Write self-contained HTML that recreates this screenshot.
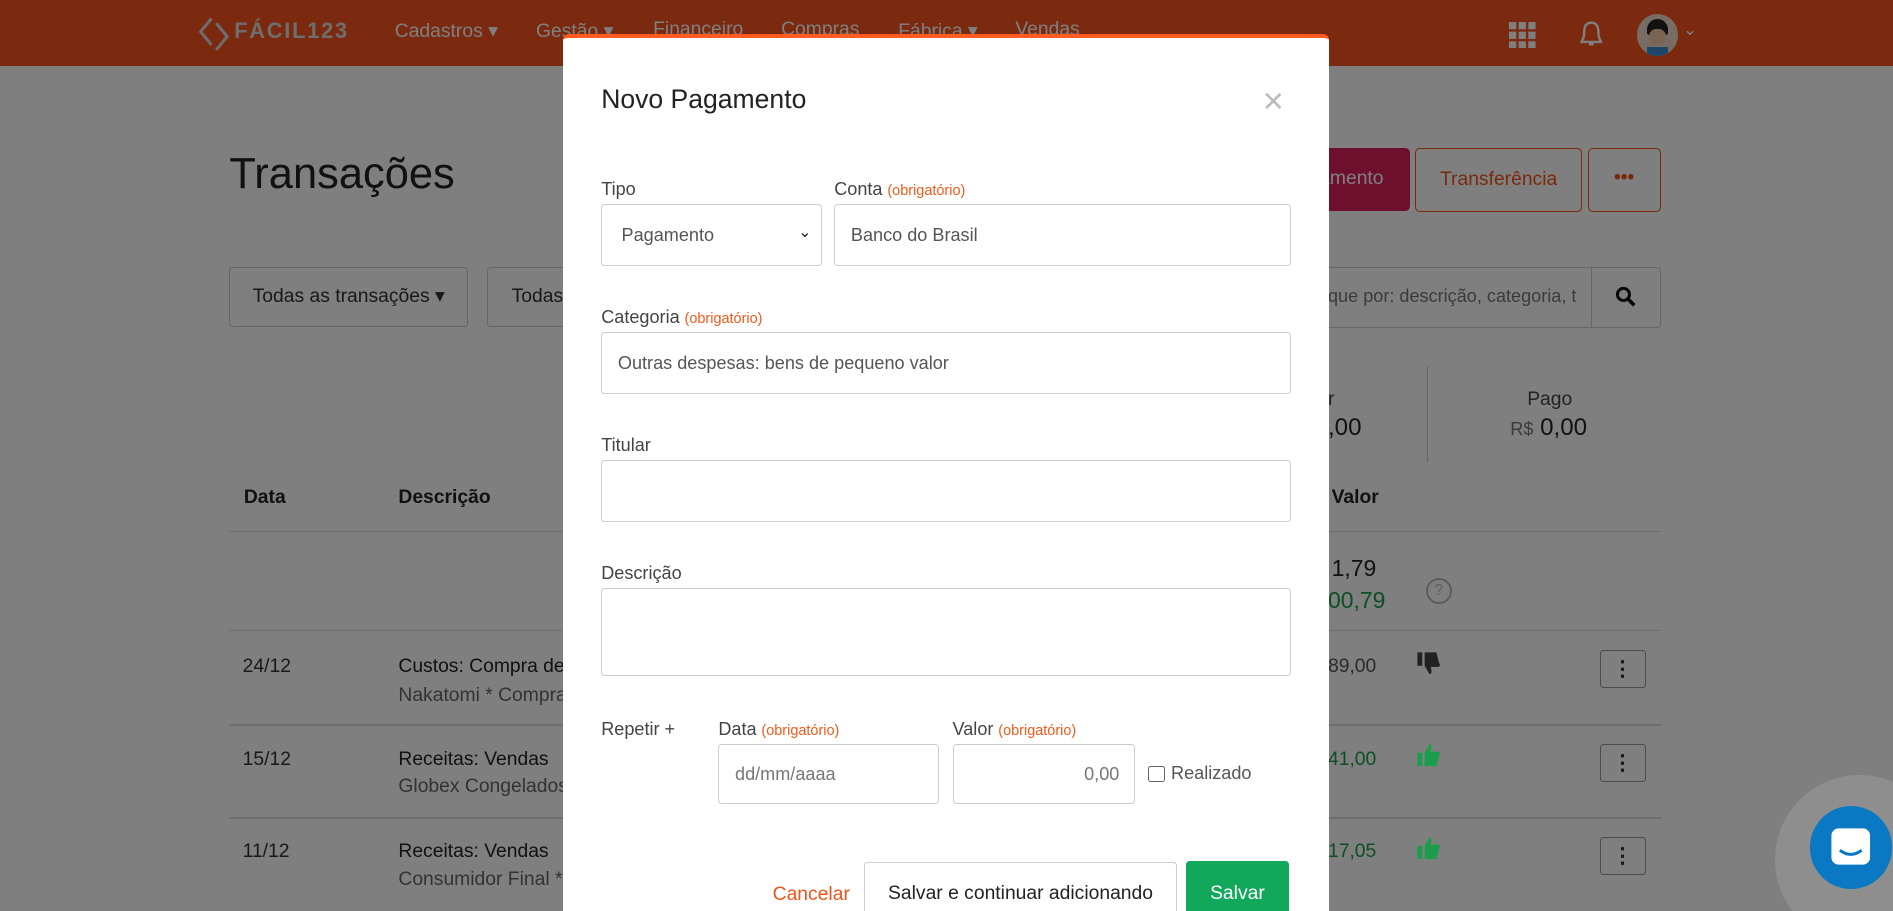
<!DOCTYPE html>
<html><head><meta charset="utf-8"><style>
html,body{margin:0;padding:0;overflow:hidden}
body{width:1568px;height:755px;zoom:1.20727;position:relative;font-family:"Liberation Sans",sans-serif;background:#fff;color:#333}
.a{position:absolute;white-space:nowrap}
.hdr{position:absolute;left:0;top:0;width:1568px;height:55px;background:#f6541e}
.nav{color:#fff;font-size:16px;top:16px}
.ov{position:absolute;left:0;top:0;width:1568px;height:755px;background:rgba(0,0,0,.5)}
.modal{position:absolute;left:466px;top:28px;width:635px;height:740px;background:#fff;border-top:4px solid #ff5a1f;border-radius:5px 5px 0 0}
.lbl{font-size:15px;color:#444}
.req{font-size:12px;color:#f05a1a;margin-left:4px}
.in{position:absolute;border:1px solid #ccc;border-radius:3px;background:#fff;font-size:15px;color:#555;box-sizing:border-box}
.btnk{position:absolute;width:38px;height:32px;border:1px solid #999;border-radius:3px;box-sizing:border-box;font-size:18px;text-align:center;line-height:30px;font-weight:bold;color:#333}
</style></head><body>
<div class="hdr"></div>
<svg class="a" style="left:163px;top:13px" width="28" height="30" viewBox="0 0 28 30"><path d="M12 2 L3 13 L12 24 M16 6 L25 17 L16 28" stroke="#ddd" stroke-width="2.5" fill="none"/></svg>
<div class="a" style="left:194px;top:15px;font-size:18px;color:#ddd;letter-spacing:1.5px;font-weight:bold">FÁCIL123</div>
<div class="a nav" style="left:327px">Cadastros ▾</div>
<div class="a nav" style="left:444px">Gestão ▾</div>
<div class="a nav" style="left:541px">Financeiro</div>
<div class="a nav" style="left:647px">Compras</div>
<div class="a nav" style="left:744px">Fábrica ▾</div>
<div class="a nav" style="left:841px">Vendas</div>
<svg class="a" style="left:1250px;top:18px" width="22" height="22"><g fill="#fff"><rect x="0" y="0" width="6" height="6"/><rect x="8" y="0" width="6" height="6"/><rect x="16" y="0" width="6" height="6"/><rect x="0" y="8" width="6" height="6"/><rect x="8" y="8" width="6" height="6"/><rect x="16" y="8" width="6" height="6"/><rect x="0" y="16" width="6" height="6"/><rect x="8" y="16" width="6" height="6"/><rect x="16" y="16" width="6" height="6"/></g></svg>
<svg class="a" style="left:1307px;top:16px" width="22" height="26"><path d="M11 3 C5 3 5 9 5 14 L3 19 L19 19 L17 14 C17 9 17 3 11 3Z M9 21 h4" stroke="#fff" stroke-width="2" fill="none"/></svg>
<div class="a" style="left:1356px;top:12px;width:34px;height:34px;border-radius:50%;background:#f0d8c8;overflow:hidden"><div style="position:absolute;left:8px;top:4px;width:18px;height:13px;background:#222;border-radius:9px 9px 2px 2px"></div><div style="position:absolute;left:10px;top:12px;width:14px;height:13px;background:#f5c9a8;border-radius:6px"></div><div style="position:absolute;left:8px;top:27px;width:18px;height:10px;background:#3a8fd0"></div></div>
<div class="a" style="left:1394px;top:16px;color:#fff;font-size:14px">⌄</div>

<div class="a" style="left:190px;top:124px;font-size:36px;color:#222">Transações</div>
<div class="a" style="left:1080px;top:123px;width:88px;height:52px;background:#dc1f5d;border-radius:4px;color:#fff;font-size:16px;line-height:52px;text-align:right;padding-right:0"><span style="margin-right:22px">gamento</span></div>
<div class="a" style="left:1172px;top:123px;width:137px;height:51px;border:1px solid #f0541a;border-radius:4px;color:#f0541a;font-size:16px;line-height:51px;text-align:center">Transferência</div>
<div class="a" style="left:1315px;top:123px;width:59px;height:51px;border:1px solid #f0541a;border-radius:4px;color:#f0541a;font-size:16px;line-height:48px;text-align:center;font-weight:bold">•••</div>
<div class="a" style="left:190px;top:221px;width:196px;height:48px;border:1px solid #ccc;border-radius:3px;line-height:48px;text-align:center;font-size:16px;color:#333">Todas as transações ▾</div>
<div class="a" style="left:403px;top:221px;width:100px;height:48px;border:1px solid #ccc;border-radius:3px;line-height:48px;font-size:16px;color:#333;padding-left:20px">Todas</div>
<div class="a" style="left:1090px;top:221px;width:284px;height:49px;border:1px solid #ccc;border-radius:3px"></div>
<div class="a" style="left:1100px;top:237px;font-size:15px;color:#777">que por: descrição, categoria, t</div>
<div class="a" style="left:1318px;top:221px;width:1px;height:50px;background:#ccc"></div>
<svg class="a" style="left:1338px;top:237px" width="18" height="18"><circle cx="7" cy="7" r="5" stroke="#111" stroke-width="2.5" fill="none"/><path d="M11 11 L16 16" stroke="#111" stroke-width="3"/></svg>
<div class="a" style="left:1100px;top:322px;font-size:16px;color:#444">r</div>
<div class="a" style="left:1100px;top:343px;font-size:20px;color:#222">,00</div>
<div class="a" style="left:1182px;top:303px;width:1px;height:80px;background:#ccc"></div>
<div class="a" style="left:1265px;top:322px;font-size:16px;color:#444">Pago</div>
<div class="a" style="left:1251px;top:343px;font-size:20px;color:#222"><span style="font-size:15px;color:#777">R$</span> 0,00</div>
<div class="a" style="left:202px;top:403px;font-size:16px;font-weight:bold;color:#222">Data</div>
<div class="a" style="left:330px;top:403px;font-size:16px;font-weight:bold;color:#222">Descrição</div>
<div class="a" style="left:1103px;top:403px;font-size:16px;font-weight:bold;color:#222">Valor</div>
<div class="a" style="left:190px;top:440px;width:1186px;height:1px;background:#ddd"></div>
<div class="a" style="left:1103px;top:460px;font-size:19px;color:#222">1,79</div>
<div class="a" style="left:1100px;top:486px;font-size:19px;color:#1a9e4b">00,79</div>
<div class="a" style="left:1181px;top:479px;width:18px;height:18px;border:2px solid #bbb;border-radius:50%;font-size:13px;color:#bbb;text-align:center;line-height:18px">?</div>
<div class="a" style="left:190px;top:522px;width:1186px;height:1px;background:#ddd"></div>
<div class="a" style="left:190px;top:600px;width:1186px;height:1px;background:#ddd"></div>
<div class="a" style="left:190px;top:677px;width:1186px;height:1px;background:#ddd"></div>
<div class="a" style="left:201px;top:543px;font-size:16px">24/12</div>
<div class="a" style="left:330px;top:543px;font-size:16px;color:#222">Custos: Compra de</div>
<div class="a" style="left:330px;top:567px;font-size:16px;color:#666">Nakatomi * Compra</div>
<div class="a" style="left:1100px;top:543px;font-size:16px;color:#555">89,00</div>
<div class="btnk" style="left:1325px;top:538px">⋮</div>
<div class="a" style="left:201px;top:620px;font-size:16px">15/12</div>
<div class="a" style="left:330px;top:620px;font-size:16px;color:#222">Receitas: Vendas</div>
<div class="a" style="left:330px;top:643px;font-size:16px;color:#666">Globex Congelados</div>
<div class="a" style="left:1100px;top:620px;font-size:16px;color:#1a9e4b">41,00</div>
<div class="btnk" style="left:1325px;top:616px">⋮</div>
<div class="a" style="left:201px;top:697px;font-size:16px">11/12</div>
<div class="a" style="left:330px;top:697px;font-size:16px;color:#222">Receitas: Vendas</div>
<div class="a" style="left:330px;top:720px;font-size:16px;color:#666">Consumidor Final *</div>
<div class="a" style="left:1100px;top:697px;font-size:16px;color:#1a9e4b">17,05</div>
<div class="btnk" style="left:1325px;top:693px">⋮</div>
<div class="ov"></div>
<svg class="a" style="left:1172px;top:538px" width="22" height="22"><g transform="translate(0,22) scale(1,-1)"><path d="M2 9h4v11H2z M8 9 L12 2 C14 2 14 4 13 8 L19 8 C21 8 21 10 20 11 L18 19 C18 20 17 20 16 20 L8 20Z" fill="#222"/></g></svg>
<svg class="a" style="left:1172px;top:615px" width="22" height="22"><path d="M2 9h4v11H2z M8 9 L12 2 C14 2 14 4 13 8 L19 8 C21 8 21 10 20 11 L18 19 C18 20 17 20 16 20 L8 20Z" fill="#1a9e4b"/></svg>
<svg class="a" style="left:1172px;top:692px" width="22" height="22"><path d="M2 9h4v11H2z M8 9 L12 2 C14 2 14 4 13 8 L19 8 C21 8 21 10 20 11 L18 19 C18 20 17 20 16 20 L8 20Z" fill="#1a9e4b"/></svg>
<div class="a" style="left:1470px;top:642px;width:140px;height:140px;border-radius:50%;background:rgba(255,255,255,.12)"></div>
<div class="a" style="left:1499px;top:668px;width:68px;height:68px;border-radius:50%;background:#0a78c2"></div>
<svg class="a" style="left:1515px;top:684px" width="36" height="36"><rect x="2" y="2" width="32" height="30" rx="6" fill="#fff"/><path d="M9 20 Q18 27 27 20" stroke="#0a78c2" stroke-width="2.5" fill="none"/></svg>

<div class="modal">
<div class="a" style="left:32px;top:38px;font-size:22px;color:#222">Novo Pagamento</div>
<div class="a" style="left:580px;top:35px;font-size:30px;color:#bbb;font-weight:300">×</div>
<div class="a lbl" style="left:32px;top:117px">Tipo</div>
<div class="a lbl" style="left:225px;top:117px">Conta<span class="req">(obrigatório)</span></div>
<div class="in" style="left:32px;top:138px;width:183px;height:51px;padding:16px 0 0 16px">Pagamento<span style="position:absolute;right:8px;top:14px;font-size:13px;color:#222">⌄</span></div>
<div class="in" style="left:225px;top:138px;width:378px;height:51px;padding:16px 0 0 13px">Banco do Brasil</div>
<div class="a lbl" style="left:32px;top:223px">Categoria<span class="req">(obrigatório)</span></div>
<div class="in" style="left:32px;top:244px;width:571px;height:51px;padding:16px 0 0 13px">Outras despesas: bens de pequeno valor</div>
<div class="a lbl" style="left:32px;top:329px">Titular</div>
<div class="in" style="left:32px;top:350px;width:571px;height:51px"></div>
<div class="a lbl" style="left:32px;top:435px">Descrição</div>
<div class="in" style="left:32px;top:456px;width:571px;height:73px"></div>
<div class="a lbl" style="left:32px;top:564px">Repetir +</div>
<div class="a lbl" style="left:129px;top:564px">Data<span class="req">(obrigatório)</span></div>
<div class="a lbl" style="left:323px;top:564px">Valor<span class="req">(obrigatório)</span></div>
<div class="in" style="left:129px;top:585px;width:183px;height:50px;padding:16px 0 0 13px;color:#777">dd/mm/aaaa</div>
<div class="in" style="left:323px;top:585px;width:151px;height:50px;padding:16px 12px 0 0;text-align:right;color:#777">0,00</div>
<div class="a" style="left:485px;top:603px;width:12px;height:12px;border:1px solid #666;border-radius:2px"></div>
<div class="a lbl" style="left:504px;top:601px;color:#555">Realizado</div>
<div class="a" style="left:174px;top:701px;font-size:16px;color:#f0541a">Cancelar</div>
<div class="a" style="left:250px;top:683px;width:257px;height:52px;border:1px solid #ccc;border-radius:3px;font-size:16px;color:#222;text-align:center;line-height:52px">Salvar e continuar adicionando</div>
<div class="a" style="left:516px;top:682px;width:86px;height:54px;background:#12a85c;border-radius:3px;font-size:16px;color:#fff;text-align:center;line-height:54px">Salvar</div>
</div>
</body></html>
